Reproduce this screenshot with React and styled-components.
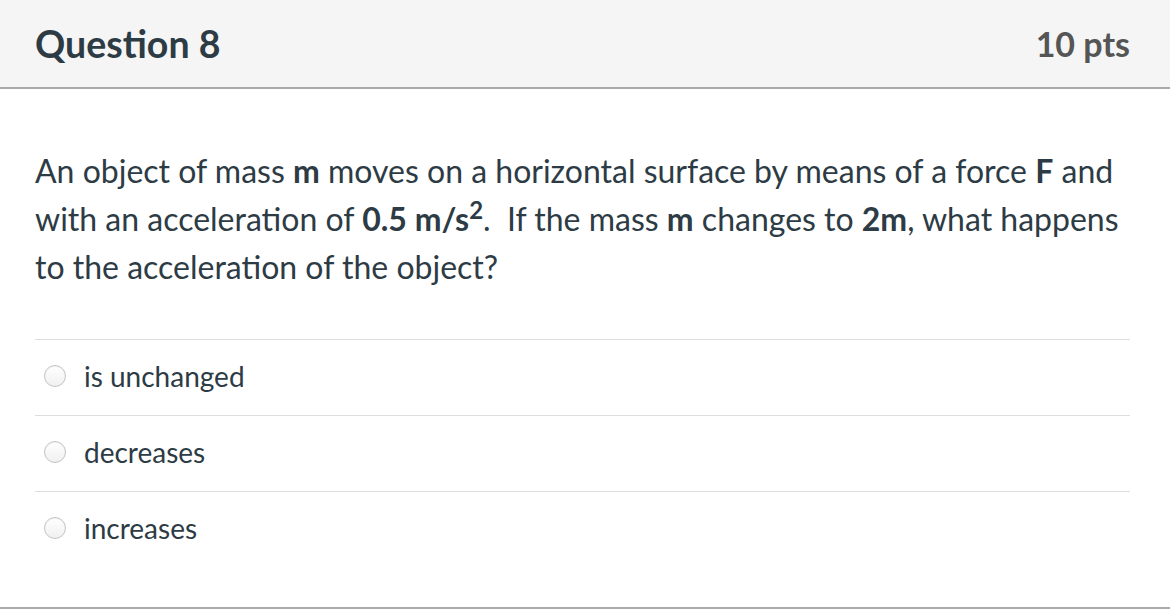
import React from "react";
import styled, { createGlobalStyle } from "styled-components";

const GlobalStyle = createGlobalStyle`
  html, body {
    margin: 0;
    padding: 0;
    background: #fff;
    font-family: Lato, "Open Sans", sans-serif;
  }
`;

const Card = styled.div`
  width: 1170px;
  border-bottom: 2px solid #aaa;
  color: #2d3b45;
`;

const Header = styled.div`
  display: flex;
  align-items: center;
  justify-content: space-between;
  height: 87px;
  padding: 0 40px 0 35px;
  background: #f5f5f5;
  border-bottom: 2px solid #aaa;
`;

const Title = styled.h2`
  margin: 0;
  font-size: 37.5px;
  font-weight: 700;
  color: #2d3b45;
`;

const Points = styled.div`
  font-size: 34px;
  font-weight: 700;
  color: #555;
`;

const Body = styled.div`
  padding: 58px 40px 0 35px;
`;

const Question = styled.p`
  margin: 0 0 48px;
  font-size: 32px;
  line-height: 48px;
`;

const Answers = styled.div`
  display: flex;
  flex-direction: column;
  padding-bottom: 40px;
`;

const Answer = styled.label`
  display: flex;
  align-items: center;
  gap: 18px;
  height: 76px;
  box-sizing: border-box;
  padding: 0 0 4px 9px;
  border-top: 1.5px solid #ddd;
  font-size: 28px;
`;

const Radio = styled.span`
  width: 22px;
  height: 22px;
  border-radius: 50%;
  box-sizing: border-box;
  border: 1px solid #c4c4c4;
  background: linear-gradient(#fff, #f0f0f0);
  box-shadow: inset 0 1px 1px rgba(0, 0, 0, 0.06);
`;

const answers = ["is unchanged", "decreases", "increases"];

export default function App() {
  return (
    <>
      <GlobalStyle />
      <Card>
        <Header>
          <Title>Question 8</Title>
          <Points>10 pts</Points>
        </Header>
        <Body>
          <Question>
            An object of mass <b>m</b> moves on a horizontal surface by means of a
            force <b>F</b> and with an acceleration of{" "}
            <b>
              0.5 m/s<sup style={{ fontSize: "0.75em", lineHeight: 0 }}>2</sup>
            </b>
            .&nbsp; If the mass <b>m</b> changes to <b>2m</b>, what happens to the
            acceleration of the object?
          </Question>
          <Answers>
            {answers.map((a) => (
              <Answer key={a}>
                <Radio />
                {a}
              </Answer>
            ))}
          </Answers>
        </Body>
      </Card>
    </>
  );
}
